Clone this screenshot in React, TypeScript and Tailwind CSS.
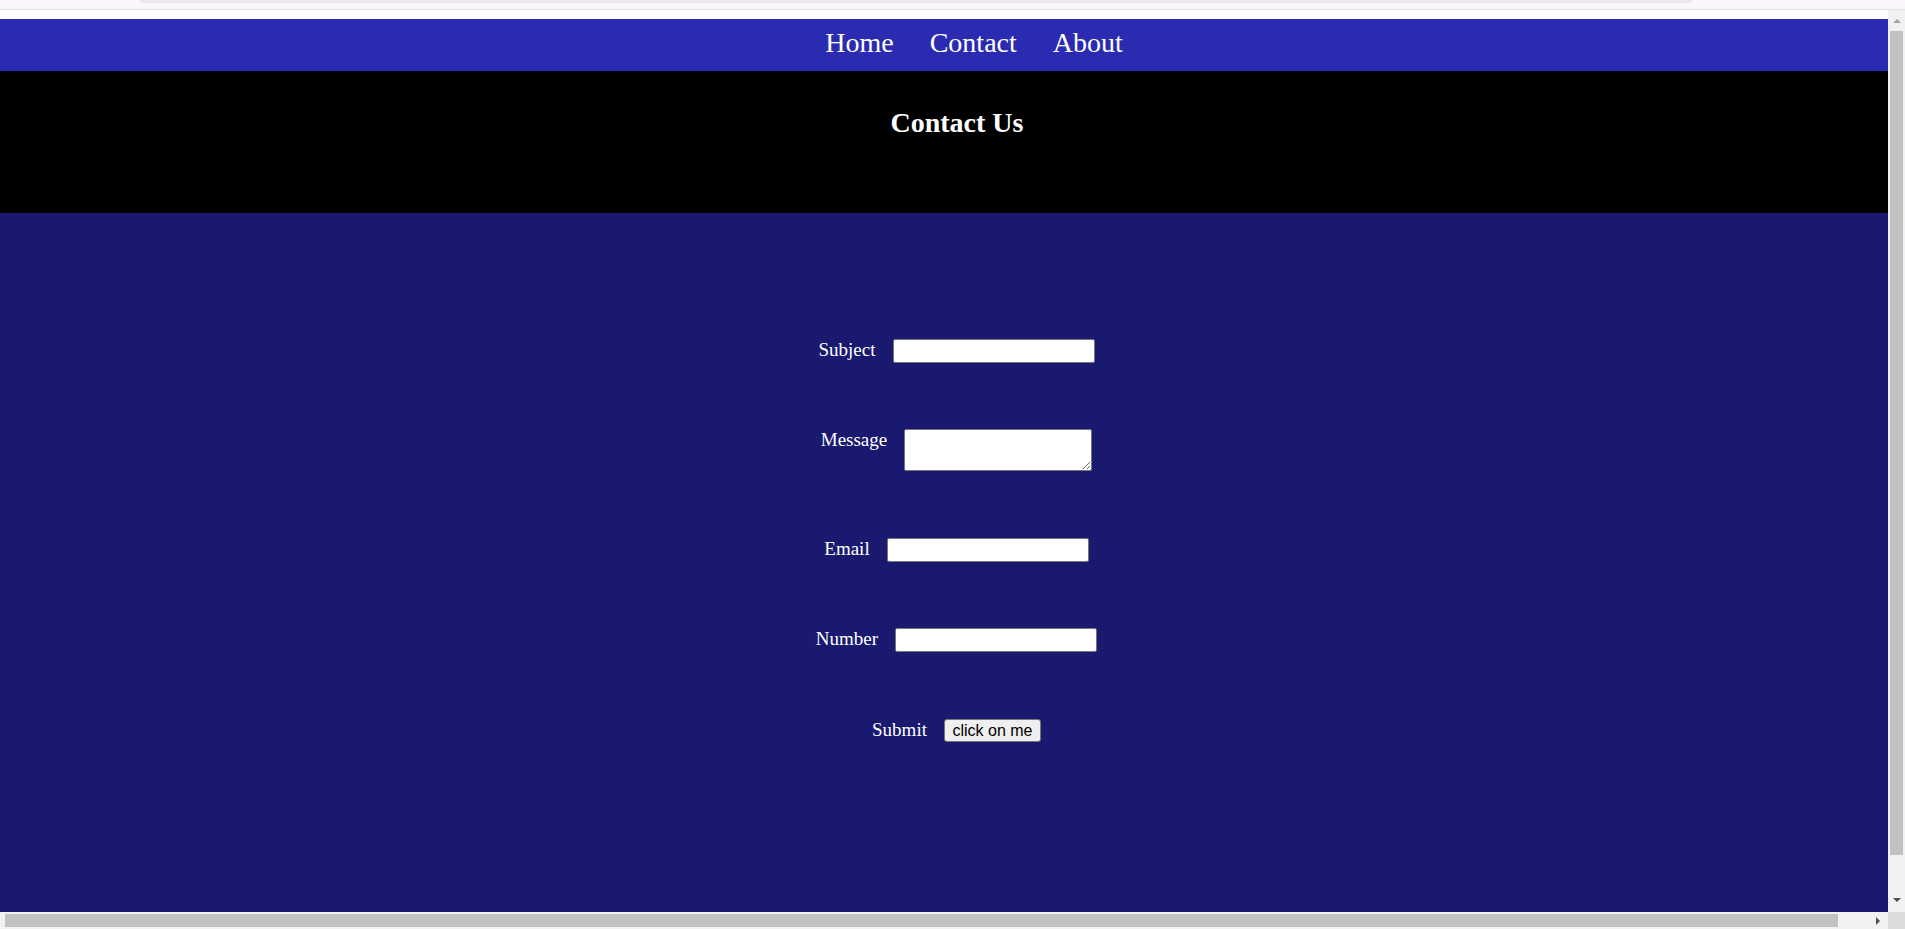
import React from "react";

const serif = { fontFamily: '"Liberation Serif", "Times New Roman", serif' };

function Row({ label, children, mt }: { label: string; children: React.ReactNode; mt: string }) {
  return (
    <div className={`flex justify-center items-start gap-[17px] ${mt}`}>
      <label className="text-[19px] leading-[21px] text-white">{label}</label>
      {children}
    </div>
  );
}

const inputCls = "w-[202px] h-[24px] bg-white border border-[#767676] rounded-[2px]";

export default function App() {
  return (
    <div className="w-[1905px] h-[929px] overflow-hidden flex flex-col bg-white" style={serif}>
      {/* top chrome strip */}
      <div className="h-[10px] bg-[#fcf6fc] border-b border-[#e6e0e6] relative">
        <div className="absolute left-[140px] right-[213px] top-0 h-[3px] bg-[#ebe6eb] rounded-b-[6px]" />
      </div>
      <div className="flex h-[902px]">
        <div className="w-[1888px] flex flex-col">
          <div className="h-[9px] bg-white" />
          <nav className="h-[52px] bg-[#2b2bb1] flex justify-center gap-[36px] pl-[60px] pt-[8px]">
            <a className="text-[28px] leading-[32px] text-white">Home</a>
            <a className="text-[28px] leading-[32px] text-white">Contact</a>
            <a className="text-[28px] leading-[32px] text-white">About</a>
          </nav>
          <div className="h-[142px] bg-black pt-[36px] pl-[26px] flex justify-center">
            <h1 className="text-[28px] leading-[32px] font-bold text-white">Contact Us</h1>
          </div>
          <div className="flex-1 bg-[#191970] pt-[126px] pl-[25px]">
            <Row label="Subject" mt="">
              <input className={inputCls} />
            </Row>
            <Row label="Message" mt="mt-[66px]">
              <textarea className="w-[188px] h-[42px] bg-white border border-[#767676] rounded-[2px]" />
            </Row>
            <Row label="Email" mt="mt-[67px]">
              <input className={inputCls} />
            </Row>
            <Row label="Number" mt="mt-[66px]">
              <input className={inputCls} />
            </Row>
            <Row label="Submit" mt="mt-[67px]">
              <button
                className="w-[97px] h-[23px] bg-[#efefef] border border-[#767676] rounded-[3px] text-[16px] leading-[20px] text-black"
                style={{ fontFamily: '"Liberation Sans", Arial, sans-serif' }}
              >
                click on me
              </button>
            </Row>
          </div>
        </div>
        {/* vertical scrollbar */}
        <div className="w-[17px] bg-[#f1f1f1] flex flex-col items-center">
          <div className="h-[21px] flex items-center justify-center">
            <div className="w-0 h-0 border-l-[4px] border-r-[4px] border-b-[4px] border-l-transparent border-r-transparent border-b-[#a3a3a3]" />
          </div>
          <div className="w-[13px] h-[824px] bg-[#c1c1c1]" />
          <div className="flex-1 flex items-end justify-center pb-[10px]">
            <div className="w-0 h-0 border-l-[4px] border-r-[4px] border-t-[4px] border-l-transparent border-r-transparent border-t-[#505050]" />
          </div>
        </div>
      </div>
      {/* horizontal scrollbar */}
      <div className="h-[17px] flex">
        <div className="w-[1888px] bg-[#f1f1f1] flex items-center">
          <div className="ml-[5px] w-[1833px] h-[13px] bg-[#c1c1c1]" />
          <div className="flex-1 flex justify-end pr-[8px]">
            <div className="w-0 h-0 border-t-[4px] border-b-[4px] border-l-[4px] border-t-transparent border-b-transparent border-l-[#505050]" />
          </div>
        </div>
        <div className="w-[17px] bg-[#dcdcdc]" />
      </div>
    </div>
  );
}
